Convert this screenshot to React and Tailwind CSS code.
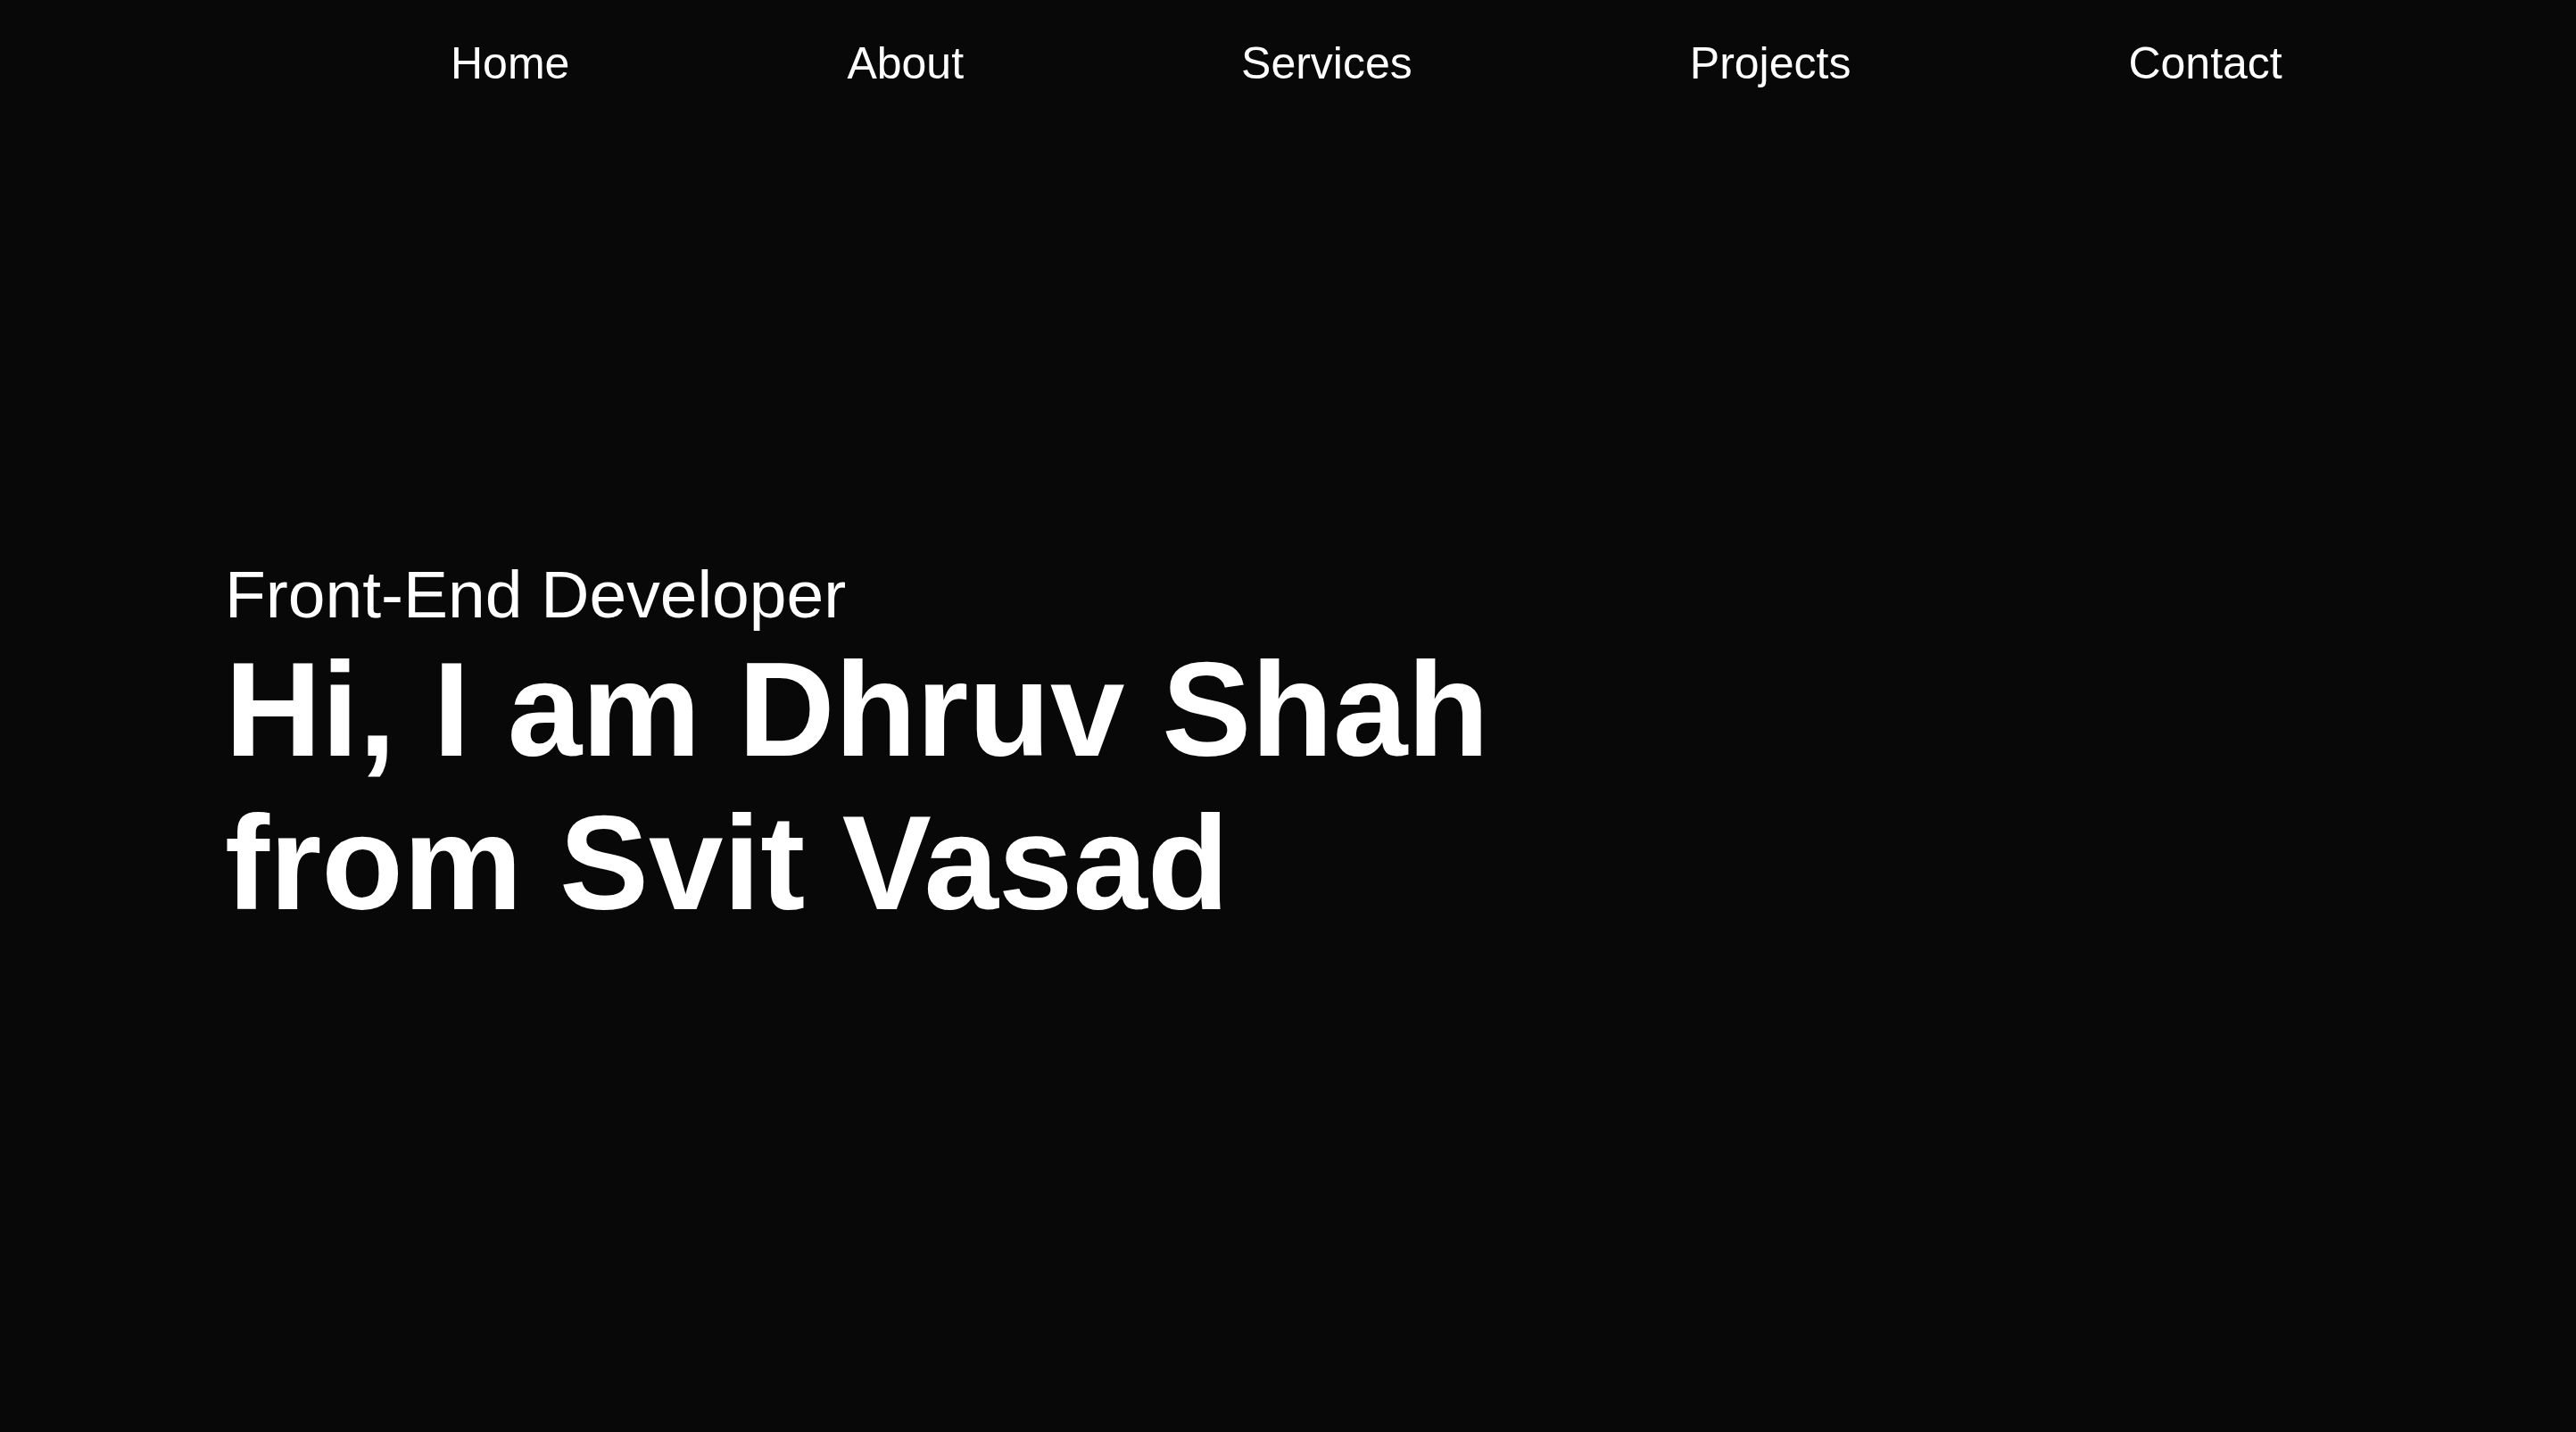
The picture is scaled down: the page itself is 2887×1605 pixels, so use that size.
import React from 'react';

const links = ['Home', 'About', 'Services', 'Projects', 'Contact'];

function App() {
  return (
    <div className="min-h-screen bg-[#080808] text-white font-['Liberation_Sans',Arial,sans-serif]">
      {/* Top navigation */}
      <nav className="h-[140px] pt-[46px] pl-[505px]">
        <ul className="flex gap-[311px]">
          {links.map((l) => (
            <li key={l}>
              <a href={`#${l.toLowerCase()}`} className="text-[50px] leading-[50px]">
                {l}
              </a>
            </li>
          ))}
        </ul>
      </nav>

      {/* Hero */}
      <section className="pt-[483px] pl-[252px]">
        <h2 className="text-[75px] leading-[86px]">Front-End Developer</h2>
        <h1 className="text-[150px] leading-[172px] font-bold">
          Hi, I am Dhruv Shah
          <br />
          from Svit Vasad
        </h1>
      </section>
    </div>
  );
}

export default App;
